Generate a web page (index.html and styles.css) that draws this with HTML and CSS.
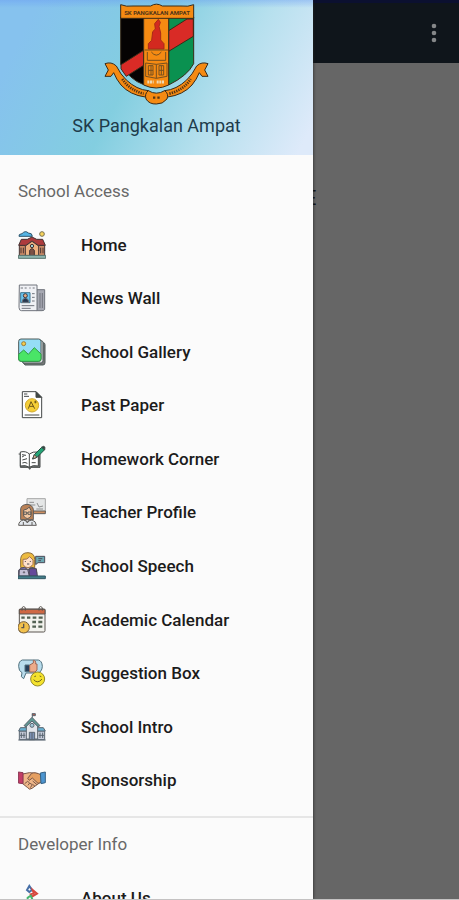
FILE: index.html
```html
<!DOCTYPE html>
<html lang="en">
<head>
  <meta charset="UTF-8" />
  <meta name="viewport" content="width=device-width, initial-scale=1" />
  <title>SK Pangkalan Ampat</title>
  <link rel="stylesheet" href="styles.css">
</head>
<body>
  <aside class="drawer">
    <header class="drawer-header">
      <svg class="crest" viewBox="41 8 315 306" aria-hidden="true">
        <g stroke="#3b2b18" stroke-width="3" stroke-linejoin="round">
          <path d="M91 50V192Q118 238 160 253V50z" fill="#050303"/>
          <path d="M235 50H310V190Q292 226 235 254z" fill="#0a9150"/>
          <path d="M92 193L160 150V195L108 228Q98 215 92 205z" fill="#d92b26"/>
          <path d="M235 91L290 56H309V108L235 153z" fill="#d92b26"/>
          <path d="M160 50H235V254Q198 272 160 254z" fill="#f58a12"/>
          <path d="M91 13Q108 20 128 17H181Q198 6 216 17H272Q294 20 310 13V54H91z" fill="#f58a12"/>
          <path d="M174 146V130L184 120L187 94L195 86L193 70L204 57L210 66L206 78L211 98V119L221 130V146z" fill="#d3291f" stroke="#a92a18"/>
          <path d="M163 149H233M171 155V180H226V155M183 155Q198 174 213 155M166 188L198 192L230 188V228L198 234L166 228zM198 192V234M174 196H188V224H174zM206 196H220V224H206zM174 210H188M206 210H220M182 196V224M213 196V224" fill="none" stroke="#76501f"/>
          <path d="M44 190Q63 183 78 197Q91 223 108 239Q139 268 174 271L165 290Q119 284 92 254Q78 237 70 217L62 228H44L54 209z" fill="#f58a12"/>
          <path d="M353 190Q334 183 319 197Q306 223 289 239Q258 268 223 271L232 290Q278 284 305 254Q319 237 327 217L335 228H353L343 209z" fill="#f58a12"/>
          <path d="M174 271Q198 286 223 271Q236 280 230 296Q217 312 198 311Q177 312 167 296Q162 280 174 271z" fill="#f58a12"/>
        </g>
        <path d="M96 236Q117 269 160 280M237 280Q280 269 301 236" fill="none" stroke="#553514" stroke-width="8" stroke-dasharray="4 3"/>
        <path d="M188 292H195M201 292H208" stroke="#553514" stroke-width="7"/>
        <path d="M171 245H190M199 245H222" stroke="#ecd9b5" stroke-width="9" stroke-dasharray="6 2"/>
        <text class="crest-name" x="200" y="45" text-anchor="middle">SK PANGKALAN AMPAT</text>
      </svg>
      <h1 class="school-name">SK Pangkalan Ampat</h1>
    </header>

    <nav class="drawer-nav">
      <h2 class="group-title">School Access</h2>
      <ul class="menu">
        <li><a class="menu-item" href="#home">
          <svg class="icon" viewBox="0 0 84 84" aria-hidden="true">
            <g stroke="#443333" stroke-width="3" stroke-linejoin="round">
              <path d="M3 16Q1 9 12 8Q22-3 31 6Q43 6 43 16z" fill="#55b4e4" stroke="#31566c"/>
              <circle cx="72" cy="9" r="7" fill="#f8d45c" stroke="#77704e"/>
              <path d="M4 43H80V74H4z" fill="#cd8b66"/>
              <path d="M2 43L10 25H28L42 18L56 25H74L82 43H60L42 30L24 43z" fill="#ad3b3d"/>
              <path d="M22 74V45L42 31L62 45V74z" fill="#edb181"/>
              <path d="M35 74V58Q42 48 49 58V74z" fill="#7c5145"/>
              <circle cx="42" cy="45" r="5" fill="#9bd3d8"/>
              <path d="M9 50V67M16 50V67M68 50V67M75 50V67" fill="none"/>
              <path d="M1 73H83V82H1z" fill="#8eb6af" stroke="#58746e"/>
            </g>
          </svg>
          <span>Home</span>
        </a></li>
        <li><a class="menu-item" href="#news">
          <svg class="icon" viewBox="0 0 84 84" aria-hidden="true">
            <g stroke="#70747c" stroke-width="3" stroke-linejoin="round">
              <path d="M56 17H80V76Q79 80 72 80H56z" fill="#a6a8b2"/>
              <path d="M4 3H57V80H10Q3 80 3 70z" fill="#f0f1f5"/>
              <path d="M8 26H36V56H8z" fill="#6bc4ef" stroke="#3d758f"/>
              <path d="M12 55Q13 43 22 42Q31 43 33 55z" fill="#25364e"/>
              <circle cx="22" cy="35" r="6" fill="#e5a77d" stroke="#333a47"/>
              <path d="M8 12H15M20 12H26M34 12H38M44 12H50M42 29H50M42 40H50M42 51H50M11 65H49M11 73H38M66 27V72M73 27V72" fill="none"/>
            </g>
          </svg>
          <span>News Wall</span>
        </a></li>
        <li><a class="menu-item" href="#gallery">
          <svg class="icon" viewBox="0 0 84 84" aria-hidden="true">
            <g stroke="#4c5a59" stroke-width="3" stroke-linejoin="round">
              <path d="M14 14H75Q81 14 81 20V74Q81 81 75 81H21L12 70z" fill="#777777"/>
              <path d="M9 8H69Q75 8 75 14V68Q75 75 69 75H15z" fill="#d8dadd"/>
              <rect x="2" y="3" width="67" height="67" rx="7" fill="#95ddf7"/>
              <circle cx="17" cy="17" r="6" fill="#f5cc4c" stroke="#987c3c"/>
              <path d="M2 49L17 36L31 49L49 29L69 48V62Q69 70 61 70H10Q2 70 2 62z" fill="#49e567" stroke="#309c46"/>
            </g>
          </svg>
          <span>School Gallery</span>
        </a></li>
        <li><a class="menu-item" href="#papers">
          <svg class="icon" viewBox="0 0 84 84" aria-hidden="true">
            <g stroke="#444848" stroke-width="3" stroke-linejoin="round">
              <path d="M13 2H54L71 19V80H13z" fill="#fff"/>
              <path d="M54 2V19H71z" fill="#3f4743"/>
              <path d="M18 9H28M18 16H33M20 72H64" fill="none"/>
              <circle cx="42" cy="43" r="20" fill="#f5ce37" stroke="#d1aa31"/>
              <path d="M31 53L39 32L50 53M35 46H46M49 33H56M52 29V37" fill="none" stroke="#6c5517"/>
            </g>
          </svg>
          <span>Past Paper</span>
        </a></li>
        <li><a class="menu-item" href="#homework">
          <svg class="icon" viewBox="0 0 84 84" aria-hidden="true">
            <g stroke="#454948" stroke-width="3" stroke-linejoin="round">
              <path d="M2 27H7V67H31L35 73L39 67H66V27H61" fill="#777b7b"/>
              <path d="M7 21Q24 17 34 27Q44 19 61 21V63Q44 59 34 67Q24 59 7 63z" fill="#fff"/>
              <path d="M34 27V67M12 29L24 31M12 36L19 32M13 45L27 41M13 54Q21 50 28 55M41 53H53" fill="none"/>
              <path d="M44 42L49 29L71 7L80 14L57 37z" fill="#24a476" stroke="#224d3f"/>
              <path d="M44 42L49 29L57 37z" fill="#e3c39a"/>
              <path d="M71 7Q77 1 81 7L80 14z" fill="#284c44"/>
            </g>
          </svg>
          <span>Homework Corner</span>
        </a></li>
        <li><a class="menu-item" href="#teachers">
          <svg class="icon" viewBox="0 0 84 84" aria-hidden="true">
            <g stroke="#5f5c59" stroke-width="3" stroke-linejoin="round">
              <path d="M27 2H82V41H27z" fill="#e5e7e7" stroke="#a5a7a7"/>
              <path d="M34 13H48M34 21H52M57 15L63 27L75 24M55 33H75" fill="none" stroke="#8d8f8f"/>
              <path d="M46 39H82V47H46z" fill="#ce9062"/>
              <path d="M8 65V32Q10 20 27 19Q43 20 46 34V65z" fill="#b98156"/>
              <path d="M2 82Q2 69 16 66L28 70L42 66Q54 69 55 82z" fill="#e4e9ee"/>
              <path d="M17 36Q28 35 34 27L39 38V54Q28 69 17 54z" fill="#f3c7a2"/>
              <path d="M17 42H26V49H17zM30 42H39V49H30zM26 45H30M22 66L28 75L34 66M16 72V81M42 72V81" fill="none"/>
            </g>
          </svg>
          <span>Teacher Profile</span>
        </a></li>
        <li><a class="menu-item" href="#speech">
          <svg class="icon" viewBox="0 0 84 84" aria-hidden="true">
            <g stroke="#4d4b59" stroke-width="3" stroke-linejoin="round">
              <path d="M53 13H80V32H60L53 38z" fill="#6da9b3"/>
              <path d="M8 47V20Q10 2 30 2Q50 3 50 22V48z" fill="#edbb40" stroke="#8c6b38"/>
              <path d="M15 22Q28 24 35 14L45 24V37Q30 57 15 38z" fill="#ffe0c8" stroke="#a37557"/>
              <path d="M2 71V55Q8 46 20 46L30 54L40 46Q55 48 56 61V71z" fill="#8377ba"/>
              <path d="M4 52H29L34 72H3z" fill="#c5c1d6"/>
              <path d="M34 50H55L58 72H34z" fill="#654a9a"/>
              <circle cx="18" cy="61" r="2" fill="#fff"/>
              <path d="M22 27V30M37 27V30M27 36H34M61 20H73M61 26H69" fill="none"/>
              <path d="M0 72H82V80H0z" fill="#427d88" stroke="#315663"/>
            </g>
          </svg>
          <span>School Speech</span>
        </a></li>
        <li><a class="menu-item" href="#calendar">
          <svg class="icon" viewBox="0 0 84 84" aria-hidden="true">
            <g stroke="#5a5550" stroke-width="3" stroke-linejoin="round">
              <rect x="4" y="9" width="77" height="69" rx="4" fill="#f3f3ee"/>
              <path d="M4 10H81V24H4z" fill="#ce6844"/>
              <path d="M12 14V5Q17-2 22 5V14M63 14V5Q68-2 73 5V14" fill="none"/>
              <path d="M10 35H20M27 35H37M44 35H55M62 35H74M43 48H54M61 48H73M43 62H54M61 62H73" fill="none" stroke="#536253" stroke-width="7"/>
              <circle cx="17" cy="64" r="17" fill="#f2c14d" stroke="#765b35"/>
              <path d="M17 53V65H10" fill="none" stroke-width="4"/>
            </g>
          </svg>
          <span>Academic Calendar</span>
        </a></li>
        <li><a class="menu-item" href="#suggestions">
          <svg class="icon" viewBox="0 0 84 84" aria-hidden="true">
            <g stroke="#51717e" stroke-width="3" stroke-linejoin="round">
              <path d="M13 3H61Q72 5 73 22Q72 39 59 42H24L17 59L10 53L12 41Q2 37 2 22Q2 6 13 3z" fill="#b8dcec"/>
              <path d="M21 18H35V38H21z" fill="#263e59"/>
              <path d="M35 18L46 12V4Q54 3 53 15H57V33L51 39H35z" fill="#edab8a" stroke="#9b6756"/>
              <circle cx="59" cy="60" r="21" fill="#f4e22d" stroke="#958a2a"/>
              <path d="M49 53L54 51M65 51L70 53M47 62Q59 76 72 60" fill="none" stroke="#70651f"/>
            </g>
          </svg>
          <span>Suggestion Box</span>
        </a></li>
        <li><a class="menu-item" href="#intro">
          <svg class="icon" viewBox="0 0 84 84" aria-hidden="true">
            <g stroke="#596570" stroke-width="3" stroke-linejoin="round">
              <path d="M43 14V1" fill="none"/>
              <path d="M43 2H52V8H43z" fill="#b66051"/>
              <path d="M4 54H80V80H4z" fill="#c7ccda"/>
              <path d="M2 54L7 44H76L82 54z" fill="#69b1d2"/>
              <path d="M25 78V34L42 18L59 34V78z" fill="#e1e5eb"/>
              <path d="M18 38L42 13L66 38L60 41L42 24L24 41z" fill="#609894"/>
              <circle cx="42" cy="37" r="6" fill="#a0c7d9"/>
              <path d="M34 80V58H50V80zM42 58V80" fill="#7c91b4"/>
              <path d="M10 59V75M18 59V75M66 59V75M74 59V75M6 67H22M62 67H78" fill="none"/>
              <path d="M1 81H83" fill="none"/>
            </g>
          </svg>
          <span>School Intro</span>
        </a></li>
        <li><a class="menu-item" href="#sponsorship">
          <svg class="icon" viewBox="0 0 84 84" aria-hidden="true">
            <g stroke="#795646" stroke-width="3" stroke-linejoin="round">
              <path d="M14 24L34 20L54 22L70 29L67 49L42 67Q34 73 29 65L14 53z" fill="#f0b789"/>
              <path d="M29 37L41 22Q52 17 70 27V49L60 52L43 36L34 43z" fill="#e59f61"/>
              <path d="M20 53L29 46L35 51L30 58M36 52L43 56L37 65M44 55L51 61M44 45L57 56" fill="none"/>
              <path d="M1 18L15 20V53L1 51z" fill="#c33d67" stroke="#893652"/>
              <path d="M67 21L82 18V50L69 53z" fill="#4c95d0" stroke="#356184"/>
            </g>
          </svg>
          <span>Sponsorship</span>
        </a></li>
      </ul>

      <h2 class="group-title divided">Developer Info</h2>
      <ul class="menu-more">
        <li><a class="menu-item" href="#about">
          <svg class="icon" viewBox="0 0 84 84" aria-hidden="true">
            <g fill="none" stroke-width="6">
              <path d="M27 18L34 6L42 18L34 24z" stroke="#476fa7"/>
              <path d="M44 18L57 29L42 38L38 31L47 28z" stroke="#d6473e"/>
              <path d="M29 52V41L38 35L43 46L37 54z" stroke="#45b56e"/>
            </g>
          </svg>
          <span>About Us</span>
        </a></li>
      </ul>
    </nav>
  </aside>

  <main class="screen">
    <div class="app-bar">
      <button class="more" type="button" aria-label="More options">
        <svg class="dots" viewBox="0 0 6 20" aria-hidden="true">
          <circle cx="3" cy="3" r="2.3"/>
          <circle cx="3" cy="10" r="2.3"/>
          <circle cx="3" cy="17" r="2.3"/>
        </svg>
      </button>
    </div>
    <p class="covered-title">E</p>
  </main>
</body>
</html>
```

FILE: styles.css
```css
* { box-sizing: border-box; }

body {
  margin: 0;
  height: 100vh;
  display: flex;
  overflow: hidden;
  border-bottom: 1px solid #c4c2c2;
  font-family: Roboto, "Liberation Sans", sans-serif;
  background: #666666;
}

h1, h2, p, ul {
  margin: 0;
  padding: 0;
}

ul { list-style: none; }

.drawer {
  position: relative;
  flex: 0 0 68.2%;
  overflow: hidden;
  background: #fbfbfb;
  box-shadow: 0 0 3px #222222;
}

.drawer-header {
  height: 155px;
  padding-top: 3px;
  display: flex;
  flex-direction: column;
  align-items: center;
  gap: 11px;
  background:
    linear-gradient(to bottom, rgba(100, 150, 245, 0.4), rgba(100, 150, 245, 0) 8px),
    linear-gradient(117deg, #86c2ee 10%, #83cee0 43%, #b6e0ee 70%, #deeafa 96%);
}

.crest {
  width: 105px;
  height: 102px;
}

.crest-name {
  font-size: 18px;
  font-weight: 700;
  fill: #513519;
}

.school-name {
  font-size: 18px;
  line-height: 20px;
  font-weight: 400;
  color: #203b4b;
}

.group-title {
  padding: 26px 18px 16px;
  font-size: 17px;
  line-height: 21px;
  font-weight: 400;
  color: #686868;
}

.divided {
  margin-top: 9px;
  padding-top: 16px;
  border-top: 2px solid #e6e6e6;
}

/* eleven equal rows */
.menu {
  display: grid;
  grid-auto-rows: 1fr;
  min-height: 589px;
}

.menu-item {
  height: 100%;
  min-height: 53px;
  padding: 0 18px;
  display: flex;
  align-items: center;
  gap: 35px;
  font-size: 17px;
  line-height: 20px;
  font-weight: 500;
  color: #1c1c1c;
  text-decoration: none;
}

.icon {
  width: 28px;
  height: 28px;
  flex: none;
}

.screen {
  flex: 1;
  min-width: 0;
  overflow: hidden;
}

.app-bar {
  height: 63px;
  padding: 0 14px;
  display: flex;
  justify-content: flex-end;
  align-items: center;
  border-top: 3px solid #0b1030;
  background: #0f151b;
}

.more {
  padding: 0 8px;
  border: none;
  background: none;
  cursor: pointer;
}

.dots {
  display: block;
  width: 6px;
  height: 20px;
  fill: #858789;
}

.covered-title {
  padding-top: 123px;
  font-size: 20px;
  line-height: 24px;
  text-indent: -8px;
  color: #111111;
}
```
